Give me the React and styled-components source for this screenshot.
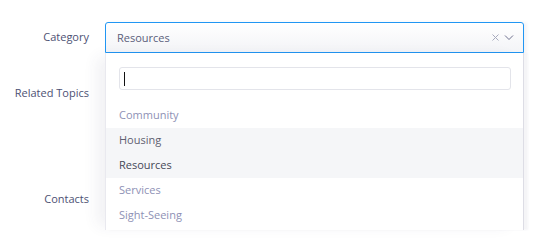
import React from 'react'
import styled, { createGlobalStyle } from 'styled-components'

const OPTIONS = [
  { label: 'Community', tone: 'muted' },
  { label: 'Housing', tone: 'hover' },
  { label: 'Resources', tone: 'selected' },
  { label: 'Services', tone: 'muted' },
  { label: 'Sight-Seeing', tone: 'muted' },
]

const GlobalStyle = createGlobalStyle`
  body {
    margin: 0;
    background: #ffffff;
    font-family: 'Open Sans', 'Liberation Sans', sans-serif;
  }
`

const App = () => (
  <>
    <GlobalStyle />
    <Page>
      <Form>
        <Label>Category</Label>
        <SelectWrap>
          <SelectBox>
            <Value>Resources</Value>
            <Indicators>
              <svg width="9" height="9" viewBox="0 0 9 9">
                <path d="M1.5 1.5l6 6M7.5 1.5l-6 6" stroke="#a7aabd" strokeWidth="1" />
              </svg>
              <svg width="10" height="7" viewBox="0 0 10 7">
                <path d="M1 1.5l4 4 4-4" stroke="#5b5f80" strokeWidth="0.9" fill="none" />
              </svg>
            </Indicators>
          </SelectBox>
          <Menu>
            <SearchBox>
              <Caret />
            </SearchBox>
            <List>
              {OPTIONS.map(({ label, tone }) => (
                <Option key={label} tone={tone}>
                  {label}
                </Option>
              ))}
            </List>
          </Menu>
        </SelectWrap>

        <Label>Related Topics</Label>
        <Field tall />

        <Label>Contacts</Label>
        <Field />
      </Form>
    </Page>
  </>
)

const Page = styled.div`
  min-height: 250px;
`

const Form = styled.div`
  display: grid;
  grid-template-columns: 90px 419px;
  column-gap: 15px;
  row-gap: 25px;
  padding-top: 22px;
`

const Label = styled.div`
  justify-self: end;
  padding-right: 1px;
  line-height: 30px;
  font-size: 11px;
  color: #4d5173;
  white-space: nowrap;
`

const Field = styled.div`
  height: ${props => (props.tall ? '81px' : '31px')};
`

const SelectWrap = styled.div`
  position: relative;
`

const SelectBox = styled.div`
  display: flex;
  align-items: center;
  justify-content: space-between;
  box-sizing: border-box;
  height: 31px;
  padding: 0 9px 1px 11px;
  border: 1px solid #2196f3;
  border-radius: 3px 3px 0 0;
  background: linear-gradient(#ffffff, #f3f4f7);
  box-shadow: 3px 0 3px rgba(60, 60, 100, 0.06);
`

const Value = styled.span`
  font-size: 11px;
  color: #5a5e7a;
`

const Indicators = styled.div`
  display: flex;
  align-items: center;
  gap: 4px;
`

const Menu = styled.div`
  position: absolute;
  top: 100%;
  left: 0;
  right: 0;
  height: 177px;
  box-sizing: border-box;
  padding: 14px 12px 0 13px;
  background: #ffffff;
  border-left: 1px solid #e9e9ef;
  border-right: 1px solid #dddde5;
  box-shadow: -12px 0 14px -4px rgba(60, 60, 100, 0.07), 4px 0 2px rgba(60, 60, 100, 0.05);
  z-index: 2;
`

const SearchBox = styled.div`
  display: flex;
  align-items: center;
  box-sizing: border-box;
  height: 23px;
  padding-left: 4px;
  border: 1px solid #e3e4ea;
  border-radius: 3px;
`

const Caret = styled.span`
  width: 1px;
  height: 14px;
  background: #111111;
`

const List = styled.div`
  margin: 13px -12px 0 -13px;
`

const Option = styled.div`
  height: 25px;
  line-height: 23px;
  padding-left: 13px;
  font-size: 11px;
  color: ${props => (props.tone === 'muted' ? '#8e91b5' : props.tone === 'selected' ? '#454857' : '#5e6070')};
  background: ${props => (props.tone === 'muted' ? 'transparent' : '#f5f6f8')};
`

export default App
